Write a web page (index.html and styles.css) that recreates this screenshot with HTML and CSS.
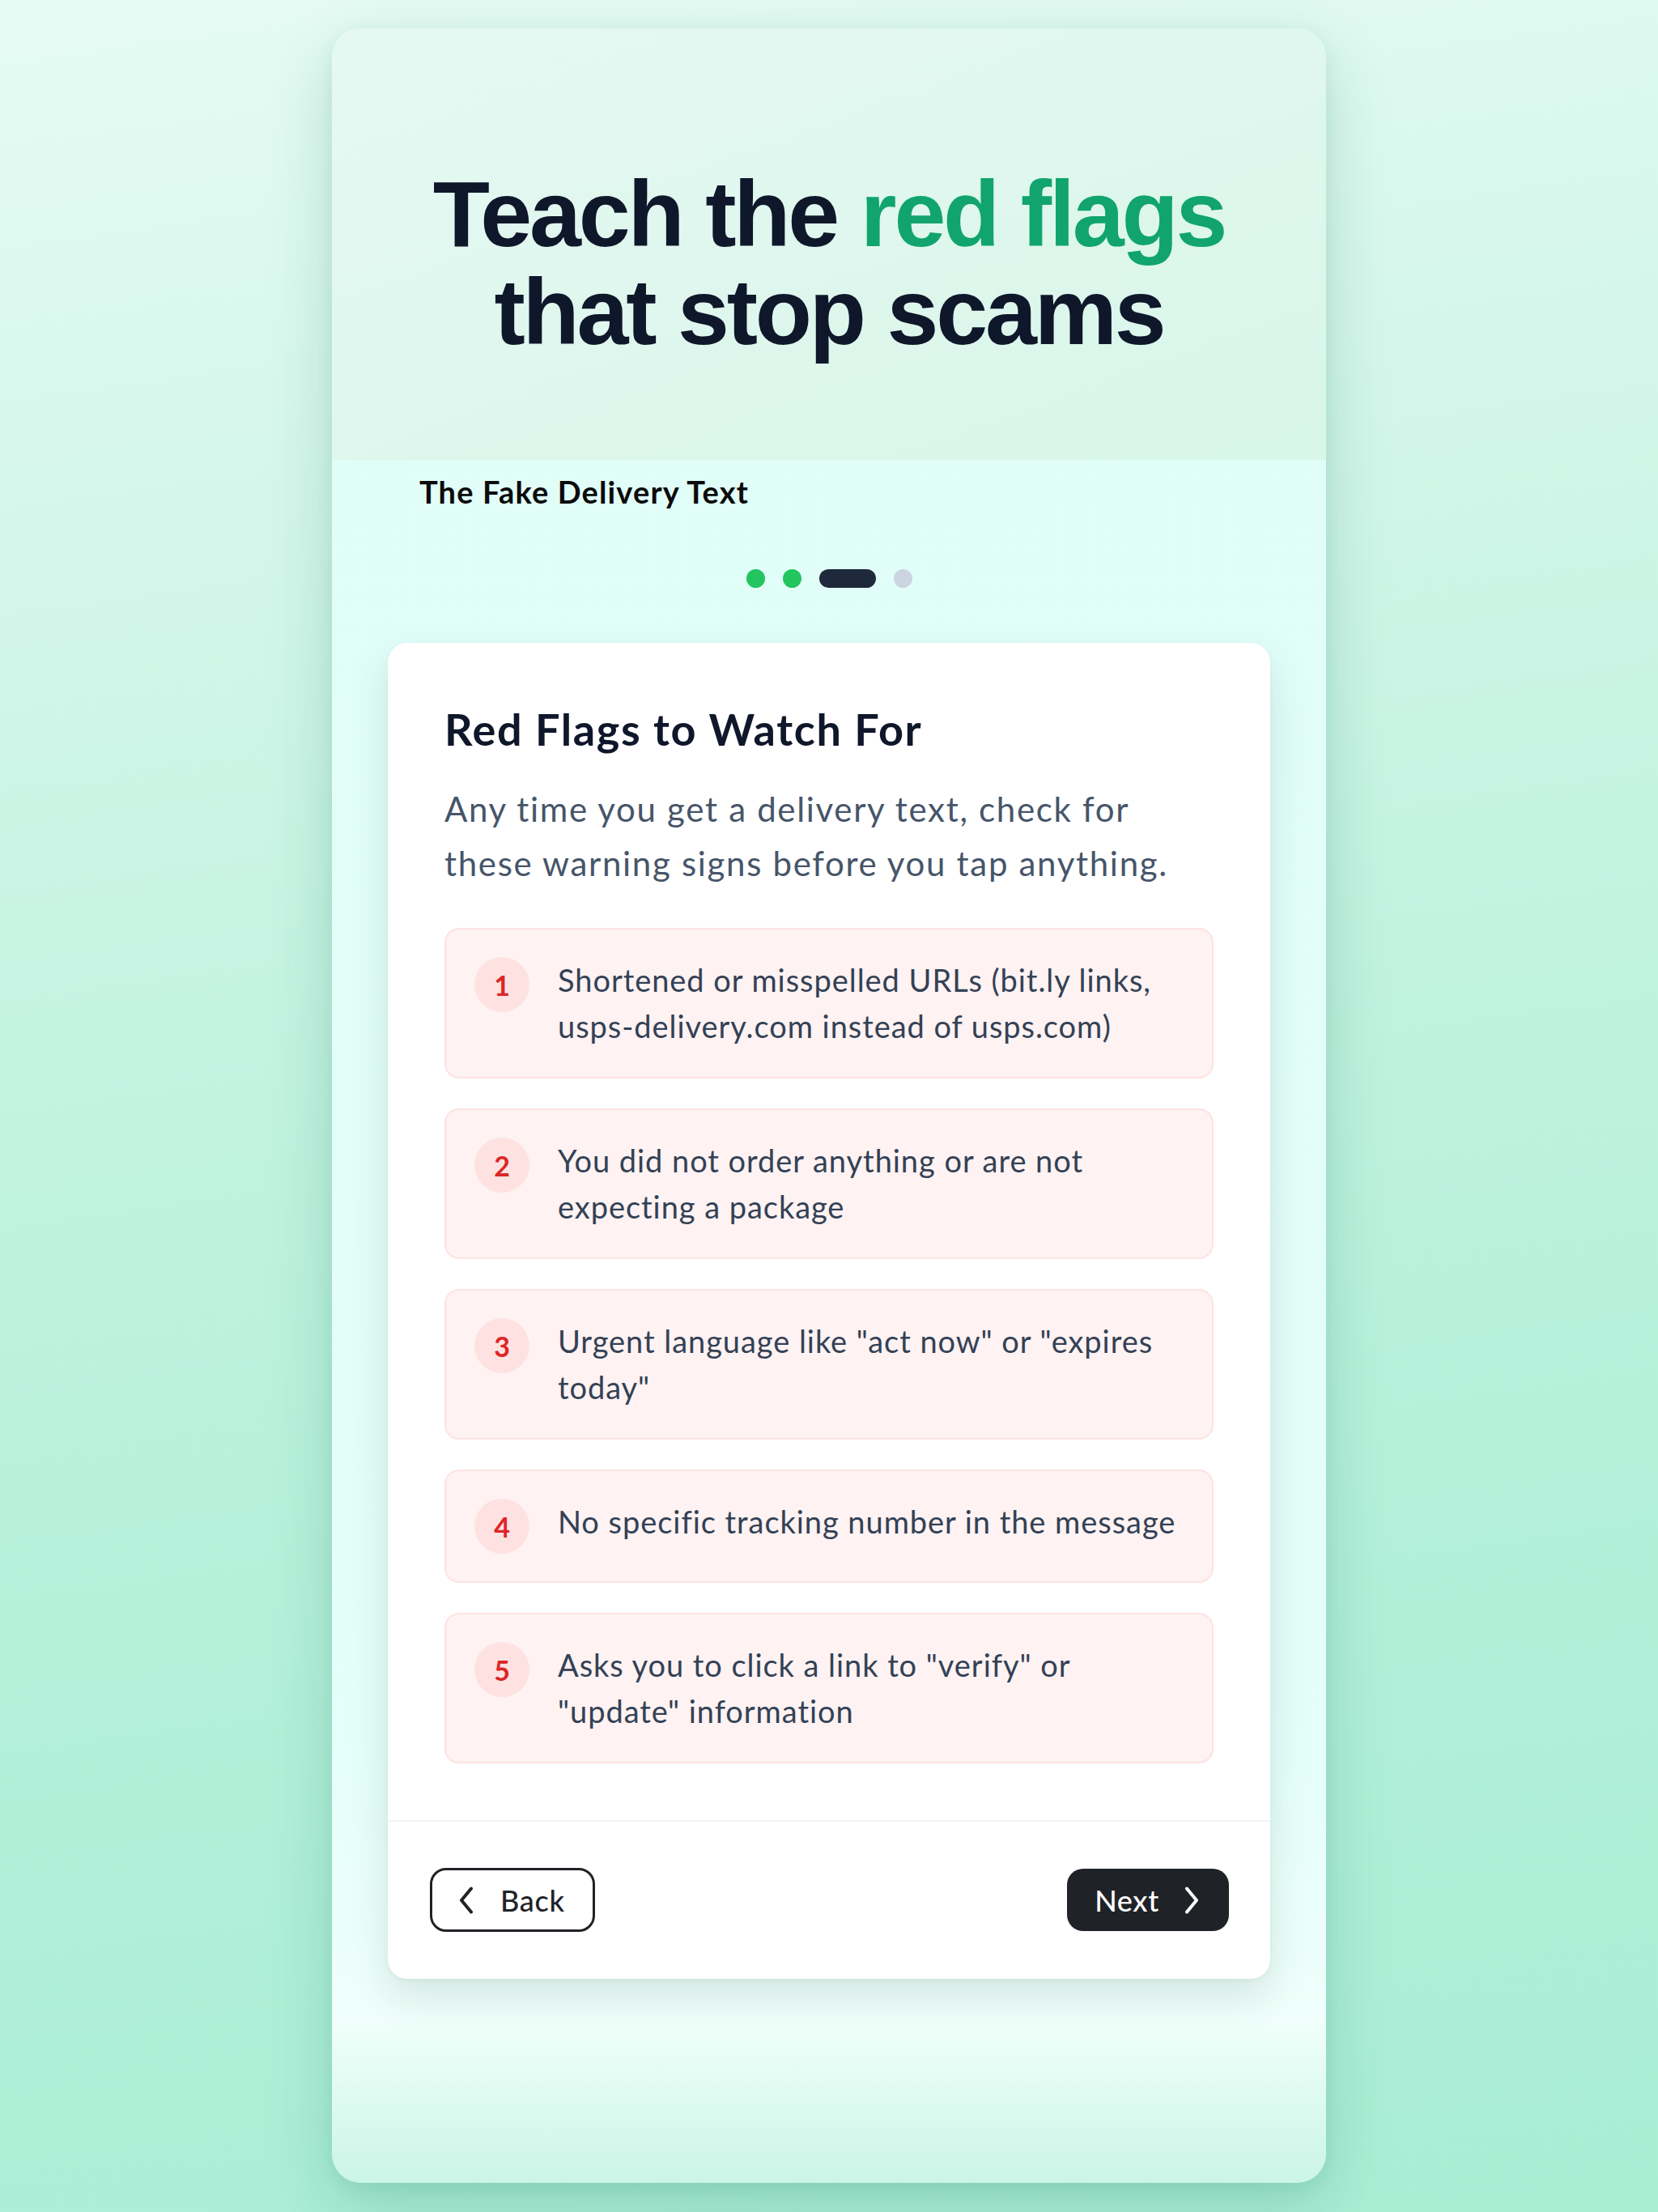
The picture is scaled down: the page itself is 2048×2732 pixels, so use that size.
FILE: index.html
```html
<!DOCTYPE html>
<html lang="en">
<head>
<meta charset="utf-8">
<title>Teach the red flags that stop scams</title>
<link rel="stylesheet" href="styles.css">
</head>
<body>
<div class="page">
  <div class="frame">
    <header class="hero">
      <h1 class="hero-title">Teach the <span class="accent">red flags</span><br>that stop scams</h1>
    </header>
    <section class="lesson">
      <div class="lesson-label">The Fake Delivery Text</div>
      <div class="dots">
        <span class="dot done"></span>
        <span class="dot done"></span>
        <span class="dot active"></span>
        <span class="dot"></span>
      </div>
      <div class="card">
        <div class="card-body">
          <h2 class="card-title">Red Flags to Watch For</h2>
          <p class="card-desc">Any time you get a delivery text, check for these warning signs before you tap anything.</p>
          <ol class="flags">
            <li class="flag"><span class="flag-num">1</span><span class="flag-text">Shortened or misspelled URLs (bit.ly links, usps-delivery.com instead of usps.com)</span></li>
            <li class="flag"><span class="flag-num">2</span><span class="flag-text">You did not order anything or are not expecting a package</span></li>
            <li class="flag"><span class="flag-num">3</span><span class="flag-text">Urgent language like "act now" or "expires today"</span></li>
            <li class="flag"><span class="flag-num">4</span><span class="flag-text">No specific tracking number in the message</span></li>
            <li class="flag"><span class="flag-num">5</span><span class="flag-text">Asks you to click a link to "verify" or<br>"update" information</span></li>
          </ol>
        </div>
        <div class="card-footer">
          <button class="btn btn-back">
            <svg class="chev" width="20" height="34" viewBox="0 0 20 34" aria-hidden="true"><polyline points="16,2.5 4,17 16,31.5" fill="none" stroke="currentColor" stroke-width="4" stroke-linecap="round" stroke-linejoin="round"/></svg>
            <span>Back</span>
          </button>
          <button class="btn btn-next">
            <span>Next</span>
            <svg class="chev" width="20" height="34" viewBox="0 0 20 34" aria-hidden="true"><polyline points="4,2.5 16,17 4,31.5" fill="none" stroke="currentColor" stroke-width="4" stroke-linecap="round" stroke-linejoin="round"/></svg>
          </button>
        </div>
      </div>
    </section>
  </div>
</div>
</body>
</html>
```

FILE: styles.css
```css
* { box-sizing: border-box; }

html, body {
  margin: 0;
  padding: 0;
}

body {
  min-height: 2732px;
  font-family: "Lato", "Noto Sans", sans-serif;
  background: linear-gradient(172deg, #e6fbf4 0%, #d2f6e9 25%, #bff2df 50%, #b1efd9 75%, #a9edd5 100%);
}

.page {
  display: flex;
  justify-content: center;
  padding-top: 35px;
}

.frame {
  width: 1228px;
  height: 2661px;
  border-radius: 36px;
  overflow: hidden;
  background: linear-gradient(180deg, #e0fdf8 0%, #e4fef9 80%, #f0fffb 92.5%, #cbf5e6 100%);
  box-shadow: 0 30px 80px rgba(20, 110, 85, 0.2), 0 6px 20px rgba(20, 110, 85, 0.08);
}

.hero {
  height: 533px;
  padding-top: 169px;
  background: linear-gradient(160deg, #e5f9f2 0%, #dff7ee 50%, #d8f6e9 100%);
  text-align: center;
}

.hero-title {
  margin: 0;
  font-family: "Liberation Sans", Arial, sans-serif;
  font-weight: 700;
  font-size: 115px;
  line-height: 1.05;
  letter-spacing: -0.028em;
  color: #0f172a;
}

.accent { color: #11a46f; }

.lesson {
  padding: 0 69px;
}

.lesson-label {
  margin-top: 17px;
  padding-left: 39px;
  font-size: 38px;
  line-height: 45.6px;
  font-weight: 700;
  color: #0b0b0b;
  letter-spacing: 0.03em;
}

.dots {
  display: flex;
  justify-content: center;
  gap: 22px;
  margin-top: 72px;
}

.dot {
  width: 23px;
  height: 23px;
  border-radius: 12px;
  background: #cbd5e1;
}
.dot.done { background: #22c55e; }
.dot.active { width: 70px; background: #1e293b; }

.card {
  margin-top: 68px;
  background: #ffffff;
  border-radius: 24px;
  box-shadow: 0 22px 50px rgba(30, 70, 60, 0.13), 0 2px 6px rgba(30, 70, 60, 0.05);
}

.card-body {
  padding: 72px 70px 70px;
}

.card-title {
  margin: 0;
  font-size: 54px;
  line-height: 1.3;
  font-weight: 700;
  color: #0f172a;
  letter-spacing: 0.03em;
}

.card-desc {
  margin: 30px 0 0;
  max-width: 905px;
  font-size: 42px;
  line-height: 1.6;
  color: #475569;
  letter-spacing: 0.04em;
}

.flags {
  list-style: none;
  margin: 46px 0 0;
  padding: 0;
  display: flex;
  flex-direction: column;
  gap: 37px;
}

.flag {
  display: flex;
  align-items: flex-start;
  gap: 35px;
  padding: 34px 30px 34px 35px;
  background: #fef2f2;
  border: 2px solid #fde3e3;
  border-radius: 18px;
}

.flag-num {
  flex: 0 0 68px;
  width: 68px;
  height: 68px;
  border-radius: 50%;
  background: #fee2e2;
  color: #dc2626;
  font-weight: 700;
  font-size: 34px;
  display: flex;
  align-items: center;
  justify-content: center;
}

.flag-text {
  font-size: 38px;
  line-height: 57px;
  color: #334155;
  letter-spacing: 0.025em;
}

.card-footer {
  display: flex;
  justify-content: space-between;
  align-items: center;
  padding: 57px 51px 58px 52px;
  border-top: 2px solid #f1f5f9;
}

.btn {
  display: flex;
  align-items: center;
  font-family: "Lato", "Noto Sans", sans-serif;
  font-size: 36px;
  font-weight: 500;
  letter-spacing: 0.02em;
  border-radius: 20px;
  cursor: pointer;
}

.btn-back {
  height: 79px;
  padding: 0 34px 0 32px;
  gap: 32px;
  background: #ffffff;
  color: #1f2328;
  border: 3px solid #1f2328;
}

.btn-next {
  height: 77px;
  padding: 0 36px 0 34px;
  gap: 30px;
  background: #1f2328;
  color: #ffffff;
  border: none;
}

.chev { display: block; }
```
